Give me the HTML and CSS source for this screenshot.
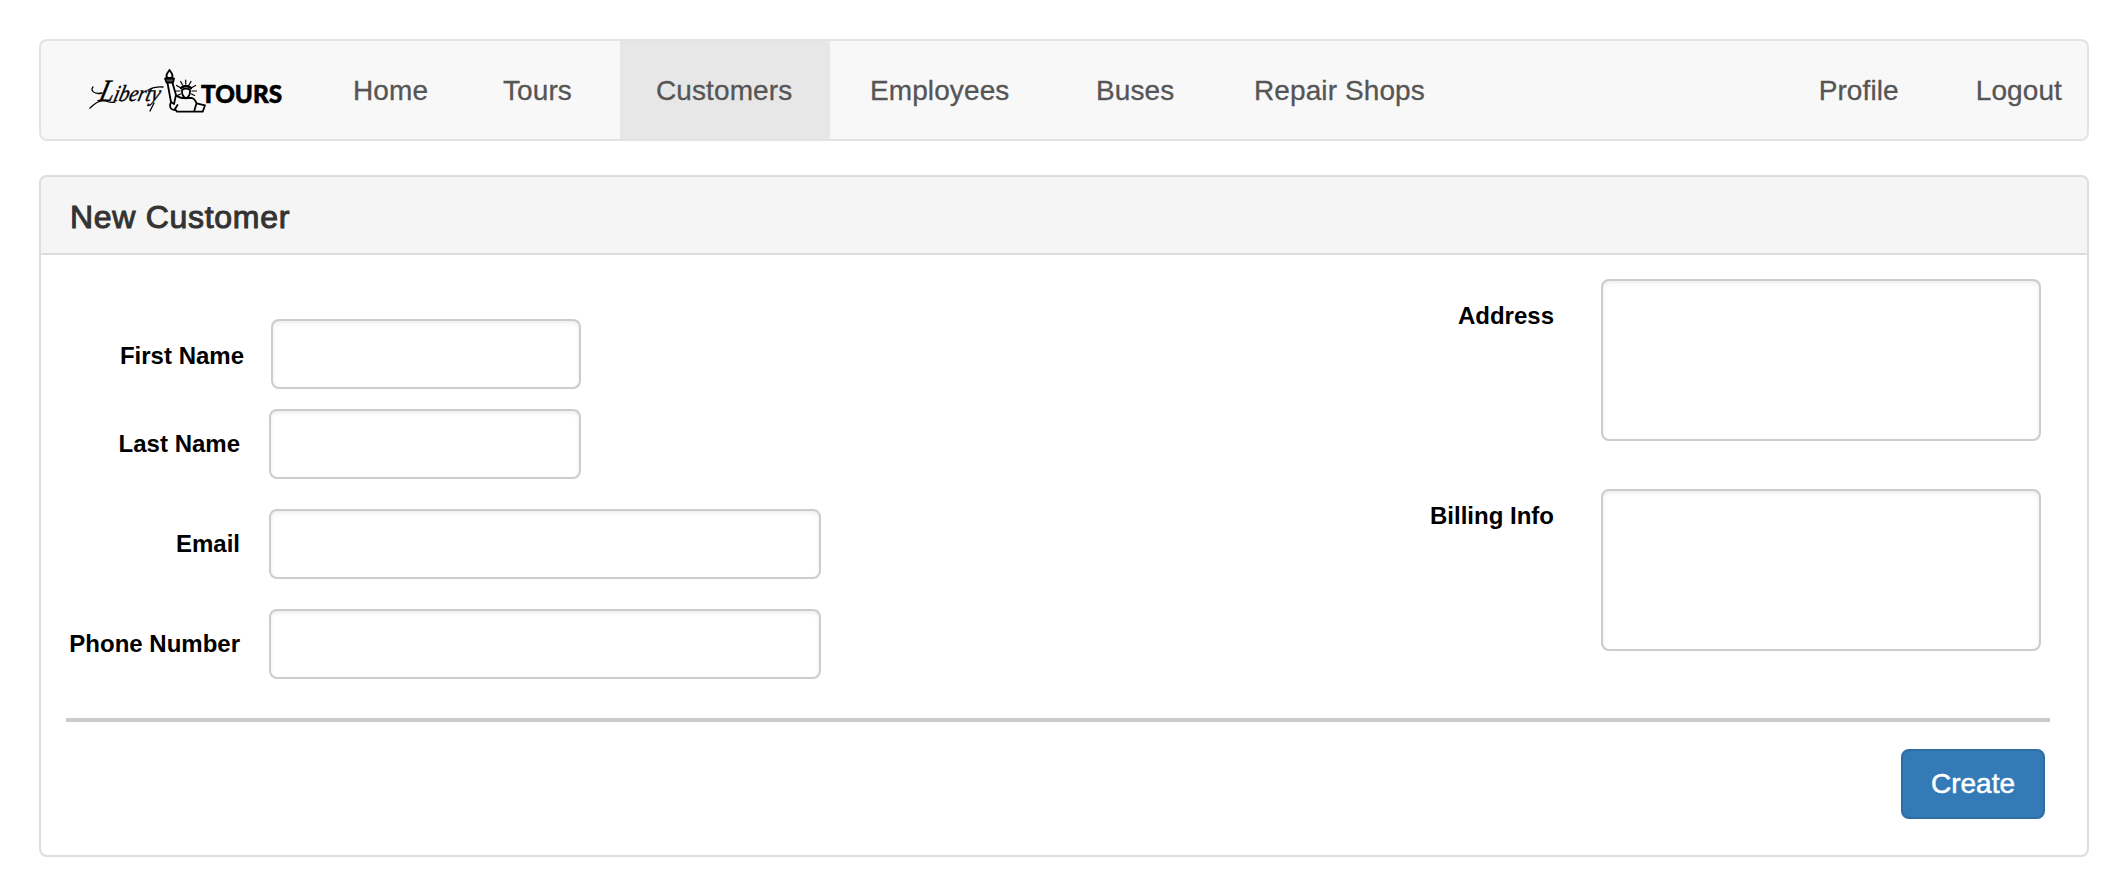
FILE: index.html
```html
<!DOCTYPE html>
<html lang="en">
<head>
<meta charset="utf-8">
<title>New Customer - Liberty Tours</title>
<link rel="stylesheet" href="styles.css">
</head>
<body>
<nav class="navbar">
  <a class="brand" href="#" aria-label="Liberty Tours">
    <svg class="logo" viewBox="0 0 200 46" width="200" height="46">
      <text class="logo-script" x="10" y="33" textLength="61" lengthAdjust="spacingAndGlyphs" transform="translate(8 0) skewX(-14)"><tspan class="logo-initial">L</tspan>iberty</text>
      <path d="M14 25C6 27 2 22 5 19M2 40C7 35 12 31 18 33Q22 35 27 34M60 22Q67 18 75 19M66 35L62 43" fill="none" stroke="#000" stroke-width="1.3" stroke-linecap="round"/>
      <g fill="none" stroke="#000" stroke-width="1.8" stroke-linejoin="round" stroke-linecap="round">
        <path d="M79 10C77 6 80 5 81.500 2C83 5 86 6 84 10Z"/>
        <path d="M77 10.500H86L85 14.500H78.500Z" fill="#555"/>
        <path d="M79.500 15L83 34C81 38 82 42 87 42M84.500 15L88 27L86 36L83 34M88 27Q91 30 94 30H104Q107 31 108.500 35.300L117 37.300L114.700 43.700H89L87 41L89.500 37M108.500 35.300L106 43.700"/>
        <path d="M94 22Q98 19 102 22Q102.500 28 98 30.500Q93.500 28 94 22Z"/>
        <path d="M93 20Q98 16 103 20" stroke-width="2.4"/>
        <path d="M97.700 16V12M94.500 17L92.700 13.500M101 17L103 13.500M92 19.500L88.500 17.500M104 19.500L107.500 17.500M92 23H87.500M104 23H108.500M92.500 26L89.500 27.500M103.500 26L106.500 27.500" stroke-width="1.200"/>
      </g>
      <text class="logo-sans" x="113" y="34.500" textLength="81" lengthAdjust="spacingAndGlyphs">TOURS</text>
    </svg>
  </a>
  <ul class="menu">
    <li><a class="link home" href="#">Home</a></li>
    <li><a class="link tours" href="#">Tours</a></li>
    <li><a class="link customers active" href="#">Customers</a></li>
    <li><a class="link employees" href="#">Employees</a></li>
    <li><a class="link buses" href="#">Buses</a></li>
    <li><a class="link shops" href="#">Repair Shops</a></li>
  </ul>
  <ul class="menu menu-right">
    <li><a class="link" href="#">Profile</a></li>
    <li><a class="link" href="#">Logout</a></li>
  </ul>
</nav>
<main class="panel">
  <header class="panel-heading"><h1 class="title">New Customer</h1></header>
  <form class="panel-body">
    <div class="fields">
      <div class="column">
        <div class="row row-first"><label class="label" for="first">First Name</label><input class="control" id="first" type="text"></div>
        <div class="row row-last"><label class="label" for="last">Last Name</label><input class="control" id="last" type="text"></div>
        <div class="row row-wide"><label class="label" for="email">Email</label><input class="control" id="email" type="text"></div>
        <div class="row row-wide"><label class="label" for="phone">Phone Number</label><input class="control" id="phone" type="text"></div>
      </div>
      <div class="column column-right">
        <div class="area-row"><label class="label area-label" for="address">Address</label><textarea class="control area" id="address"></textarea></div>
        <div class="area-row"><label class="label area-label billing" for="billing">Billing Info</label><textarea class="control area" id="billing"></textarea></div>
      </div>
    </div>
    <hr class="divider">
    <div class="actions"><button class="create" type="button">Create</button></div>
  </form>
</main>
</body>
</html>
```

FILE: styles.css
```css
* { box-sizing: border-box; }
html, body { height: 896px; overflow: hidden; }
body {
  margin: 0;
  padding: 39px;
  background: #fff;
  font-family: "Liberation Sans", Arial, sans-serif;
  font-size: 28px;
}
.navbar {
  display: flex;
  height: 102px;
  background: #f8f8f8;
  border: 2px solid #e3e3e3;
  border-radius: 8px;
}
.brand { display: block; width: 278px; padding: 27px 0 0 47px; }
.logo { display: block; overflow: visible; }
.logo-script { font: italic 23px "Liberation Serif", serif; stroke: #000; stroke-width: .4px; }
.logo-initial { font-size: 31px; }
.logo-sans { font: 900 25px Lato, sans-serif; stroke: #000; stroke-width: .6px; }
.menu { display: flex; margin: 0; padding: 0; list-style: none; }
.link {
  display: block;
  height: 98px;
  padding: 0 34px;
  line-height: 100px;
  letter-spacing: .1px;
  color: #555;
  text-decoration: none;
  white-space: nowrap;
  -webkit-text-stroke: .3px #555;
}
.home { width: 150px; }
.tours { width: 151px; }
.customers { width: 210px; padding-left: 36px; }
.employees { width: 225px; padding-left: 40px; }
.buses { width: 165px; padding-left: 41px; }
.active { background: #e7e7e7; }
.menu-right { margin-left: auto; gap: 77px; padding-right: 25px; }
.menu-right .link { padding: 0; }
.panel {
  height: 682px;
  margin-top: 34px;
  border: 2px solid #ddd;
  border-radius: 8px;
}
.panel-heading {
  height: 78px;
  padding-left: 28px;
  background: #f5f5f5;
  border-bottom: 2px solid #ddd;
  border-radius: 6px 6px 0 0;
}
.title {
  margin: 0;
  padding-left: 1px;
  font-size: 32px;
  font-weight: 400;
  line-height: 80px;
  letter-spacing: .7px;
  color: #333;
  -webkit-text-stroke: 1px #333;
}
.panel-body { padding: 24px 37px 0 25px; }
.fields { display: flex; justify-content: space-between; height: 439px; }
.column { padding-top: 40px; }
.row {
  display: grid;
  grid-template-columns: 174px 552px;
  column-gap: 29px;
  align-items: center;
  height: 70px;
}
.row-first { grid-template-columns: 178px 310px; column-gap: 27px; margin-bottom: 20px; }
.row-first .label { padding-top: 4px; }
.row-last { grid-template-columns: 174px 312px; margin-bottom: 30px; }
.row-wide { margin-bottom: 30px; }
.label { font-size: 24px; font-weight: 700; line-height: 34px; text-align: right; color: #000; white-space: nowrap; }
.control {
  width: 100%;
  height: 70px;
  margin: 0;
  border: 2px solid #ccc;
  border-radius: 8px;
  background: #fff;
  box-shadow: inset 0 2px 4px rgba(0, 0, 0, .075);
}
.column-right { display: flex; flex-direction: column; gap: 48px; padding: 0 9px 0 0; }
.area-row { display: flex; gap: 47px; justify-content: flex-end; height: 162px; }
.area-label { padding-top: 20px; }
.billing { padding-top: 10px; }
.area { width: 440px; height: 162px; resize: none; }
.divider { height: 4px; margin: 0; border: 0; background: #ccc; }
.actions { display: flex; justify-content: flex-end; padding: 27px 5px 0 0; }
.create {
  width: 144px;
  height: 70px;
  padding: 0;
  border: 2px solid #2e6da4;
  border-radius: 8px;
  background: #337ab7;
  color: #fff;
  font: 28px "Liberation Sans", Arial, sans-serif;
  -webkit-text-stroke: .5px #fff;
}
```
